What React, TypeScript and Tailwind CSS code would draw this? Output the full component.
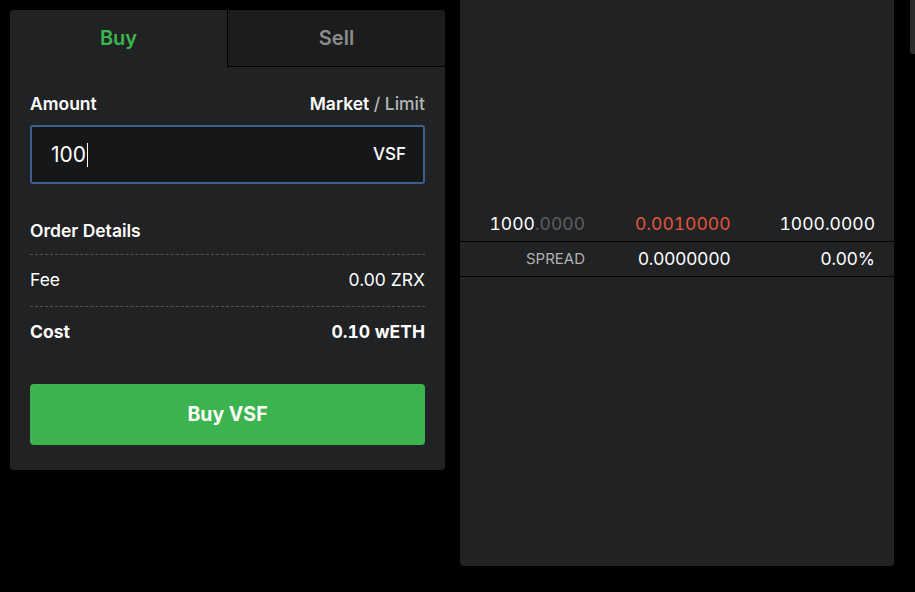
import React from "react";

const font = { fontFamily: "Inter, 'Noto Sans', sans-serif" };

const BuySellCard = () => {
  return (
    <div className="mt-[10px] w-[435px] h-[460px] shrink-0 rounded-[4px] bg-[#212224] overflow-hidden flex flex-col">
      {/* Tabs */}
      <div className="flex h-[57px]">
        <div className="flex-1 flex items-center justify-center pb-[1px] text-[20px] font-semibold text-[#3cb54e]">
          Buy
        </div>
        <div className="flex-1 flex items-center justify-center pb-[1px] text-[20px] font-semibold text-[#8c8c8c] bg-[#1c1c1d] border-l border-b border-black">
          Sell
        </div>
      </div>

      <div className="flex flex-col px-5 pt-[27px]">
        {/* Amount */}
        <div className="flex items-center justify-between h-[20px] text-[17.5px]">
          <span className="font-semibold text-white">Amount</span>
          <span className="font-semibold text-white">
            Market <span className="font-medium text-[#b4b4b4]">/ Limit</span>
          </span>
        </div>
        <div className="mt-[11px] h-[59px] rounded-[3px] border-2 border-[#3f5f91] bg-[#161718] flex items-center justify-between pl-[19px] pr-[17px]">
          <span className="text-[21px] text-white flex items-center">
            100<span className="inline-block w-px h-[24px] bg-white ml-px" />
          </span>
          <span className="text-[17px] font-medium text-white">VSF</span>
        </div>

        {/* Order details */}
        <div className="mt-[35px] h-[24px] flex items-center text-[17.5px] font-semibold text-white">
          Order Details
        </div>
        <div className="mt-[11px] border-t border-dashed border-[#555]" />
        <div className="h-[51px] flex items-center justify-between text-[17.5px] text-white">
          <span>Fee</span>
          <span>0.00 ZRX</span>
        </div>
        <div className="border-t border-dashed border-[#555]" />
        <div className="h-[51px] flex items-center justify-between text-[17.5px] font-bold text-white">
          <span>Cost</span>
          <span className="tabular-nums">0.10 wETH</span>
        </div>

        <button className="mt-[26px] h-[61px] w-full rounded-[4px] bg-[#3bb44f] text-white text-[19.5px] font-bold">
          Buy VSF
        </button>
      </div>
    </div>
  );
};

const OrderBook = () => {
  return (
    <div className="w-[434px] h-[566px] shrink-0 rounded-b-[4px] bg-[#212224] flex flex-col pt-[207px]">
      <div className="grid grid-cols-[125px_175px_1fr] h-[35px] items-center border-b border-black text-[17.5px] pr-[19px] tabular-nums">
        <span className="text-right text-white">
          1000<span className="text-[#5f5f5f]">.0000</span>
        </span>
        <span className="pl-[50px] text-[#e5553a]">0.0010000</span>
        <span className="text-right text-white">1000.0000</span>
      </div>
      <div className="grid grid-cols-[125px_175px_1fr] h-[35px] items-center border-b border-black pr-[19px]">
        <span className="text-right text-[15px] text-[#b0b0b0]">SPREAD</span>
        <span className="pl-[53px] text-[17.5px] text-white">0.0000000</span>
        <span className="text-right text-[17.5px] text-white">0.00%</span>
      </div>
    </div>
  );
};

export default function App() {
  return (
    <div className="w-[915px] h-[592px] bg-black flex pl-[10px] gap-[15px] overflow-hidden" style={font}>
      <BuySellCard />
      <OrderBook />
      <div className="ml-[1px] w-[10px] h-[54px] shrink-0 bg-[#2b2c2e] rounded-bl-[3px]" />
    </div>
  );
}
